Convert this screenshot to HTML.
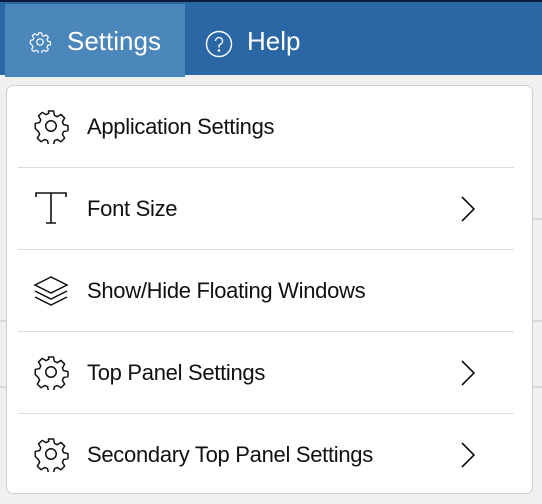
<!DOCTYPE html>
<html><head><style>
body{margin:0;width:542px;height:504px;overflow:hidden;background:#f0f0f0;font-family:"Liberation Sans",sans-serif;position:relative}
.top{position:absolute;left:0;top:0;width:542px;height:75px;background:#2b66a5;border-top:2px solid #0a1a3a;box-sizing:border-box}
.tab{position:absolute;left:5px;top:2px;width:180px;height:73px;background:#4b87bb}
.ht{position:absolute;color:#fff;font-size:26px;top:24px}
.menu{position:absolute;left:6px;top:85px;width:527px;height:409px;background:#fff;border:1px solid #cfcfcf;border-radius:7px;box-sizing:border-box}
.row{position:absolute;left:11px;width:496px;height:82px;box-sizing:border-box}
.sep{border-top:1.5px solid #ddd}
.lbl{position:absolute;left:69px;top:28px;font-size:22px;color:#111;letter-spacing:-0.3px}
.ic{position:absolute;left:15px;top:22px}
.ch{position:absolute;left:443px;top:28px}
.bg{position:absolute;background:#d8d8d8;height:2px}
</style></head><body>
<div class="bg" style="left:520px;top:218px;width:22px"></div>
<div class="bg" style="left:0;top:320px;width:542px"></div>
<div class="bg" style="left:0;top:386px;width:542px"></div>
<div class="top"><div class="tab"></div>
<svg style="position:absolute;left:29px;top:29px" width="22" height="22" viewBox="0 0 24 24" fill="none" stroke="#fff" stroke-width="1.3" stroke-linejoin="round"><path d="M10.3 2h3.4l.6 2.9 1.8.9 2.6-1.5 2.4 2.4-1.5 2.6.8 1.8 2.9.6v3.4l-2.9.6-.8 1.8 1.5 2.6-2.4 2.4-2.6-1.5-1.8.8-.6 2.9h-3.4l-.6-2.9-1.8-.8-2.6 1.5-2.4-2.4 1.5-2.6-.8-1.8L1.5 13.7v-3.4l2.9-.6.8-1.8L3.7 5.3l2.4-2.4 2.6 1.5 1.8-.9z"/><circle cx="12" cy="12" r="3.5"/></svg>
<div class="ht" style="left:67px">Settings</div>
<svg style="position:absolute;left:205px;top:28px" width="28" height="28" viewBox="0 0 28 28" fill="none" stroke="#fff" stroke-width="1.4"><circle cx="14" cy="14" r="12.5"/><path d="M10.5 11a3.5 3.5 0 1 1 5 3.2c-1 .5-1.5 1.2-1.5 2.3v1"/><circle cx="14" cy="20.5" r=".6" fill="#fff"/></svg>
<div class="ht" style="left:247px">Help</div>
</div>
<div class="menu">
<div class="row" style="top:0">
<svg class="ic" width="36" height="36" viewBox="0 0 24 24" fill="none" stroke="#111" stroke-width="1" stroke-linejoin="round"><path d="M10.3 2h3.4l.6 2.9 1.8.9 2.6-1.5 2.4 2.4-1.5 2.6.8 1.8 2.9.6v3.4l-2.9.6-.8 1.8 1.5 2.6-2.4 2.4-2.6-1.5-1.8.8-.6 2.9h-3.4l-.6-2.9-1.8-.8-2.6 1.5-2.4-2.4 1.5-2.6-.8-1.8L1.5 13.7v-3.4l2.9-.6.8-1.8L3.7 5.3l2.4-2.4 2.6 1.5 1.8-.9z"/><circle cx="12" cy="12" r="3.5"/></svg>
<div class="lbl">Application Settings</div></div>
<div class="row sep" style="top:81px">
<svg class="ic" width="36" height="36" viewBox="0 0 36 36" fill="none" stroke="#111" stroke-width="1.6"><path d="M3 7V3h30v4M18 3v30M13 33h10"/></svg>
<div class="lbl">Font Size</div>
<svg class="ch" width="14" height="26" viewBox="0 0 14 26" fill="none" stroke="#111" stroke-width="1.6"><path d="M1 1l12 12L1 25"/></svg></div>
<div class="row sep" style="top:163px">
<svg class="ic" width="36" height="36" viewBox="0 0 36 36" fill="none" stroke="#111" stroke-width="1.5"><path d="M18 5L2 13l16 8 16-8z"/><path d="M2 19l16 8 16-8"/><path d="M2 25l16 8 16-8"/></svg>
<div class="lbl">Show/Hide Floating Windows</div></div>
<div class="row sep" style="top:245px">
<svg class="ic" width="36" height="36" viewBox="0 0 24 24" fill="none" stroke="#111" stroke-width="1" stroke-linejoin="round"><path d="M10.3 2h3.4l.6 2.9 1.8.9 2.6-1.5 2.4 2.4-1.5 2.6.8 1.8 2.9.6v3.4l-2.9.6-.8 1.8 1.5 2.6-2.4 2.4-2.6-1.5-1.8.8-.6 2.9h-3.4l-.6-2.9-1.8-.8-2.6 1.5-2.4-2.4 1.5-2.6-.8-1.8L1.5 13.7v-3.4l2.9-.6.8-1.8L3.7 5.3l2.4-2.4 2.6 1.5 1.8-.9z"/><circle cx="12" cy="12" r="3.5"/></svg>
<div class="lbl">Top Panel Settings</div>
<svg class="ch" width="14" height="26" viewBox="0 0 14 26" fill="none" stroke="#111" stroke-width="1.6"><path d="M1 1l12 12L1 25"/></svg></div>
<div class="row sep" style="top:327px">
<svg class="ic" width="36" height="36" viewBox="0 0 24 24" fill="none" stroke="#111" stroke-width="1" stroke-linejoin="round"><path d="M10.3 2h3.4l.6 2.9 1.8.9 2.6-1.5 2.4 2.4-1.5 2.6.8 1.8 2.9.6v3.4l-2.9.6-.8 1.8 1.5 2.6-2.4 2.4-2.6-1.5-1.8.8-.6 2.9h-3.4l-.6-2.9-1.8-.8-2.6 1.5-2.4-2.4 1.5-2.6-.8-1.8L1.5 13.7v-3.4l2.9-.6.8-1.8L3.7 5.3l2.4-2.4 2.6 1.5 1.8-.9z"/><circle cx="12" cy="12" r="3.5"/></svg>
<div class="lbl">Secondary Top Panel Settings</div>
<svg class="ch" width="14" height="26" viewBox="0 0 14 26" fill="none" stroke="#111" stroke-width="1.6"><path d="M1 1l12 12L1 25"/></svg></div>
</div>
</body></html>
